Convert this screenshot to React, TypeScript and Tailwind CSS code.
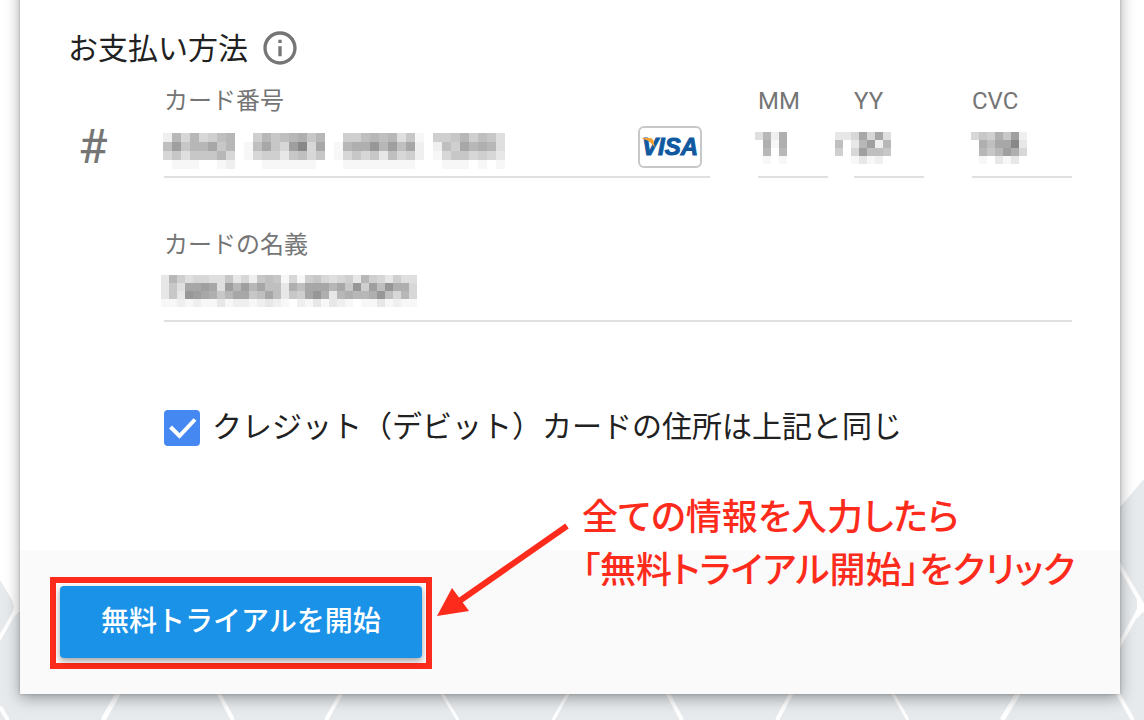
import React from 'react';
import clsx from 'clsx';
import { MdInfoOutline } from 'react-icons/md';

// One hex digit per cell: 0 is white, f is the darkest grey
const CARD_NUMBER = [
    '29595689' + '0' + '069789a79' + '0' + '0668989471' + '0' + '66796874',
    '8c799b79' + '0' + '18b75cf5b' + '0' + '19aad9c8b2' + '0' + '286b9a94',
    '57477795' + '0' + '156637857' + '0' + '1575738562' + '0' + '15775653',
    '01110012' + '0' + '001111110' + '0' + '0111111110' + '0' + '01110101',
];
const MONTH = ['492a', '0a1a', '0909', '0101'];
const YEAR = ['335b5b4', '8039c29', '605c887', '0013120'];
const CVC = ['576a7c2', '0a8bbf3', '0979ca5', '0103130'];
const HOLDER = [
    '39645544735278715167545639653644',
    '374bbcb4c9c9b883a8bbb9b7d6c8daa5',
    '373dcba79bb78b8376bda39a99ad8595',
    '11212113122123210213132101131211',
];

interface MosaicProps {
    rows: string[];
    cell?: number;
    className?: string;
}

function Mosaic({ rows, cell = 8, className }: MosaicProps) {
    const width = rows[0].length * cell;
    const height = rows.length * cell;

    return (
        <svg
            aria-hidden="true"
            width={width}
            height={height}
            viewBox={`0 0 ${width} ${height}`}
            shapeRendering="crispEdges"
            className={clsx('absolute pointer-events-none', className)}
        >
            {rows.map((row, y) =>
                row.split('').map((digit, x) => {
                    const grey = 255 - parseInt(digit, 16) * 8;
                    return (
                        <rect
                            key={`${x}-${y}`}
                            x={x * cell}
                            y={y * cell}
                            width={cell}
                            height={cell}
                            fill={`rgb(${grey},${grey},${grey})`}
                        />
                    );
                })
            )}
        </svg>
    );
}

interface FieldProps {
    id: string;
    label: string;
    className?: string;
    children?: React.ReactNode;
}

function Field({ id, label, className, children }: FieldProps) {
    return (
        <div className={className}>
            <label htmlFor={id} className="block text-2xl leading-8 text-[#757575]">
                {label}
            </label>
            <div className="relative">
                <input
                    id={id}
                    type="text"
                    autoComplete="off"
                    className="block w-full h-[61px] bg-transparent border-b-2 border-[#e0e0e0] text-3xl outline-none focus:border-[#4285f4]"
                />
                {children}
            </div>
        </div>
    );
}

function VisaBadge() {
    return (
        <div className="absolute right-2 top-[9px] w-16 h-[42px] rounded-md border-2 border-[#c8c8c8] bg-white flex items-center justify-center">
            <span className="font-['Liberation_Sans',sans-serif] text-2xl leading-6 font-bold italic text-[#1059a0] [-webkit-text-stroke:1px_#1059a0]">
                VISA
            </span>
            <svg aria-hidden="true" viewBox="0 0 60 38" className="absolute inset-0 w-full h-full">
                <path d="M2 10h8c2 0 3 1 3.500 3l1.500 7C12 15 8 12 2 10.500z" fill="#f7a233" />
            </svg>
        </div>
    );
}

function Backdrop() {
    return (
        <svg
            aria-hidden="true"
            viewBox="0 0 1144 720"
            preserveAspectRatio="xMidYMax slice"
            className="absolute inset-0 w-full h-full"
        >
            <g fill="#e6eaed">
                <path d="M0 580L12 600Q16 607 12 613L0 634z" />
                <path d="M0 641L14 617Q18 611 24 610H1100V530L1140 484Q1142 481 1144 480V720H0z" />
                <path d="M1100 550L1139 485Q1141 481 1144 480V720H1100z" />
            </g>
            <g stroke="#fff" fill="none">
                <path d="M0 707L8 720M218 692L233 720M342 692L326 720M667 692L682 720M792 692L777 720M1117 692L1133 720" strokeWidth="4" />
                <path d="M119 692L103 720M1019 692L1002 720" strokeWidth="5" />
                <path d="M441 692L458 720M892 692L908 720M569 692L553 720" strokeWidth="3" />
                <path d="M1110 549L1142 604L1110 662" strokeWidth="4" />
            </g>
            <path d="M1137 597Q1140 602 1144 603V612Q1141 613 1137 619V597z" fill="#fff" />
        </svg>
    );
}

// Red arrow and hint that point at the submit button
function Callout() {
    return (
        <div className="absolute left-[414px] -top-[60px] flex items-start pointer-events-none text-[#fd2b1c]">
            <svg aria-hidden="true" width="140" height="130" viewBox="434 490 140 130" className="shrink-0">
                <path d="M567 526L458 602" stroke="currentColor" strokeWidth="6" />
                <path d="M437 616L452 588L469 611z" fill="currentColor" />
            </svg>
            <p className="ml-2 pt-0.5 text-4xl leading-[53px] whitespace-nowrap [font-feature-settings:'palt'] font-medium">
                全ての情報を入力したら
                <br />
                「無料トライアル開始」をクリック
            </p>
        </div>
    );
}

export default function App() {
    return (
        <div className="relative min-h-screen overflow-hidden bg-white pb-[26px] font-[Roboto,'Noto_Sans_CJK_JP',sans-serif] text-[#212121]">
            <Backdrop />

            <form
                className="relative -mt-6 ml-5 mr-6 bg-white shadow-[0_4px_14px_rgba(0,0,0,0.35),0_0_3px_rgba(0,0,0,0.2)]"
                onSubmit={(e) => e.preventDefault()}
            >
                <div className="px-12 pt-12 pb-[104px]">
                    <div className="flex items-center gap-3 h-12">
                        <h2 className="pt-0.5 text-[30px] leading-10">お支払い方法</h2>
                        <button type="button" aria-label="お支払い方法について" className="text-[#757575]">
                            <MdInfoOutline size={40} />
                        </button>
                    </div>

                    {/* Card details */}
                    <div className="flex mt-[13px]">
                        <div aria-hidden="true" className="w-24 shrink-0 pl-2.5 pt-9 text-5xl leading-[52px] text-[#757575]">
                            #
                        </div>
                        <div className="flex-1 min-w-0">
                            <div className="flex">
                                <Field id="card-number" label="カード番号" className="flex-1 min-w-0">
                                    <Mosaic rows={CARD_NUMBER} cell={9} className="-left-px top-4" />
                                    <VisaBadge />
                                </Field>
                                <Field id="card-month" label="MM" className="w-[70px] ml-12">
                                    <Mosaic rows={MONTH} className="-left-[3px] top-[15px]" />
                                </Field>
                                <Field id="card-year" label="YY" className="w-[70px] ml-[26px]">
                                    <Mosaic rows={YEAR} className="-left-[19px] top-[15px]" />
                                </Field>
                                <Field id="card-cvc" label="CVC" className="w-[100px] ml-12">
                                    <Mosaic rows={CVC} className="-left-px top-[15px]" />
                                </Field>
                            </div>

                            <Field id="card-holder" label="カードの名義" className="mt-[51px]">
                                <Mosaic rows={HOLDER} className="-left-[3px] top-[14px]" />
                            </Field>

                            {/* Billing address */}
                            <div className="flex items-center gap-3 mt-[88px] h-9">
                                <div className="relative w-9 h-9 shrink-0">
                                    <input
                                        id="same-address"
                                        type="checkbox"
                                        defaultChecked
                                        className="peer block appearance-none w-9 h-9 rounded border-2 border-[#757575] checked:border-[#4688f1] checked:bg-[#4688f1]"
                                    />
                                    <svg
                                        aria-hidden="true"
                                        viewBox="0 0 36 36"
                                        className="absolute inset-0 w-9 h-9 pointer-events-none invisible peer-checked:visible"
                                    >
                                        <path d="M6.500 17L15.500 26L31 9.500" fill="none" stroke="#fff" strokeWidth="4" />
                                    </svg>
                                </div>
                                <label htmlFor="same-address" className="pb-0.5 text-[30px] leading-9">
                                    クレジット（デビット）カードの住所は上記と同じ
                                </label>
                            </div>
                        </div>
                    </div>
                </div>

                <div className="relative bg-[#fafafa] pl-[30px] pt-[27px] pb-[25px]">
                    <div className="w-fit border-6 border-[#fd2b1c] px-1 pt-[3px] pb-[5px]">
                        <button
                            type="submit"
                            className="block h-[72px] px-[41px] rounded bg-[#1a92e8] text-[28px] leading-9 font-medium text-white shadow-[0_3px_6px_rgba(0,0,0,0.35)]"
                        >
                            無料トライアルを開始
                        </button>
                    </div>
                    <Callout />
                </div>
            </form>
        </div>
    );
}
